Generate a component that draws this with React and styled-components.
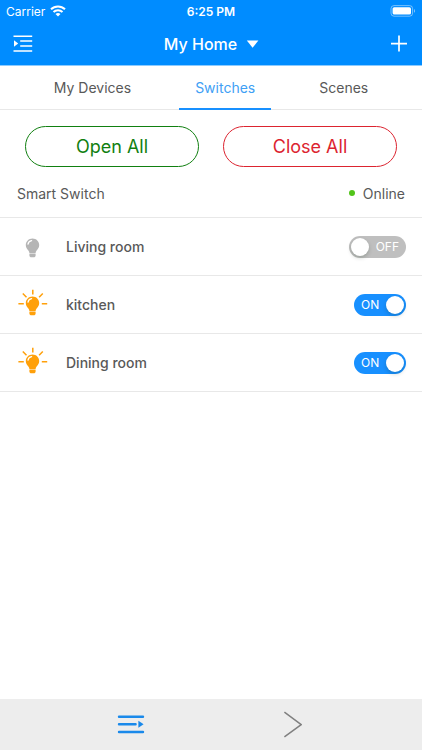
import { useState } from "react";
import styled, { createGlobalStyle } from "styled-components";

const colors = {
    Blue: "#008cff",
    Switch: "#1890ff",
    Menu: "#1a89ea",
    Text: "#595959",
    Line: "#e8e8e8",
    Green: "#118011",
    Red: "#dc2430",
    Orange: "#ffa00a",
    Grey: "#b5b5b5",
};

const GlobalStyle = createGlobalStyle`
    * {
        box-sizing: border-box;
    }

    body {
        margin: 0;
        background-color: #fff;
        color: ${colors.Text};
        font-family: Inter, "Liberation Sans", sans-serif;
        font-size: 14px;
    }

    button {
        margin: 0;
        padding: 0;
        border: 0;
        background: none;
        color: inherit;
        font: inherit;
        cursor: pointer;
    }

    svg {
        display: block;
    }
`;

const Page = styled.div`
    min-height: 100vh;
    display: flex;
    flex-direction: column;
`;

const Header = styled.header`
    background-color: ${colors.Blue};
    border-bottom: 1px solid #8ccbff;
    color: #fff;
`;

const StatusBar = styled.div`
    display: grid;
    grid-template-columns: 1fr auto 1fr;
    align-items: center;
    height: 22px;
    padding: 0 6px;
    font-size: 12px;
`;

const Carrier = styled.span`
    display: flex;
    align-items: center;
    gap: 5px;
`;

const Time = styled.span`
    font-weight: 600;
`;

const Battery = styled.span`
    justify-self: end;
`;

const NavBar = styled.div`
    display: flex;
    align-items: center;
    justify-content: space-between;
    height: 43px;
    padding: 0 14px 0 13px;
`;

const HomeButton = styled.button`
    display: flex;
    align-items: center;
    gap: 9px;
    font-size: 16px;
    font-weight: 500;
`;

const Tabs = styled.nav`
    display: flex;
    justify-content: center;
    gap: 32px;
    height: 44px;
    border-bottom: 1px solid ${colors.Line};
`;

const Tab = styled.button`
    height: 44px;
    padding: 0 16px;
    border-bottom: 2px solid ${(props) => (props.$active ? colors.Switch : "transparent")};
    color: ${(props) => (props.$active ? "#40a0f5" : colors.Text)};
`;

const Actions = styled.div`
    display: grid;
    grid-template-columns: 1fr 1fr;
    gap: 24px;
    padding: 16px 25px 0;
`;

const ActionButton = styled.button`
    height: 41px;
    border: 1px solid ${(props) => props.$color};
    border-radius: 21px;
    color: ${(props) => props.$color};
    font-size: 18px;
`;

const DeviceHeader = styled.div`
    display: flex;
    align-items: center;
    justify-content: space-between;
    height: 51px;
    padding: 2px 17px 0;
    border-bottom: 1px solid ${colors.Line};
`;

const Online = styled.span`
    display: flex;
    align-items: center;
    gap: 8px;

    &::before {
        content: "";
        width: 6px;
        height: 6px;
        border-radius: 50%;
        background-color: #52c41a;
    }
`;

const List = styled.ul`
    flex-grow: 1;
    margin: 0;
    padding: 0;
    list-style: none;
`;

const Row = styled.li`
    display: flex;
    align-items: center;
    height: 58px;
    padding: 0 16px;
    border-bottom: 1px solid ${colors.Line};
`;

const RoomName = styled.label`
    flex-grow: 1;
    margin-left: 16px;
    font-weight: 500;
`;

const Toggle = styled.label`
    position: relative;
    display: flex;
    align-items: center;
    justify-content: ${(props) => (props.$on ? "flex-start" : "flex-end")};
    width: ${(props) => (props.$on ? 52 : 57)}px;
    height: 22px;
    padding: 0 7px;
    border-radius: 11px;
    background-color: ${(props) => (props.$on ? colors.Switch : "#bfbfbf")};
    color: #fff;
    font-size: 12px;
    cursor: pointer;

    input {
        position: absolute;
        inset: 0;
        margin: 0;
        opacity: 0;
    }

    &::after {
        content: "";
        position: absolute;
        top: 2px;
        ${(props) => (props.$on ? "right" : "left")}: 2px;
        width: 18px;
        height: 18px;
        border-radius: 50%;
        background-color: #fff;
        box-shadow: 0 2px 4px rgba(0, 35, 11, 0.2);
    }
`;

const Footer = styled.footer`
    display: grid;
    grid-template-columns: 1fr 1fr;
    height: 51px;
    padding: 0 50px;
    background-color: #ededed;
`;

const FooterButton = styled.button`
    display: flex;
    align-items: center;
    justify-content: center;
`;

function WifiIcon() {
    return (
        <svg width="16" height="12" viewBox="0 0 16 12" fill="none" stroke="#fff" strokeWidth="2">
            <path d="M1 4.3a10 10 0 0 1 14 0M3.5 7a6.4 6.4 0 0 1 9 0" />
            <path d="M8 11.6 5.5 9.1a3.6 3.6 0 0 1 5 0z" fill="#fff" stroke="none" />
        </svg>
    );
}

function BatteryIcon() {
    return (
        <svg width="26" height="12" viewBox="0 0 26 12">
            <rect x="1" y=".6" width="21.6" height="10.6" rx="3" fill="none" stroke="#fff" strokeOpacity=".45" />
            <rect x="2.6" y="2.2" width="18.4" height="7.4" rx="1.6" fill="#fff" />
            <path d="M24 4c1.4.5 1.4 3.3 0 3.8z" fill="#fff" fillOpacity=".5" />
        </svg>
    );
}

function MenuIcon() {
    return (
        <svg width="20" height="18" viewBox="0 0 20 18" fill="none" stroke="#fff" strokeWidth="1.5">
            <path d="M.5 1.2h18.7M7.2 6h12M7.2 11h12M.5 15.9h18.7" />
            <path d="M1 5.2v6.6L5.2 8.5z" fill="#fff" stroke="none" />
        </svg>
    );
}

function BulbIcon({ on }) {
    const fill = on ? colors.Orange : colors.Grey;

    return (
        <svg width="34" height="34" viewBox="0 0 34 34" fill={fill}>
            <path d="M16.5 8.4c-3.8 0-6.7 2.9-6.7 6.6 0 2.5 1.2 3.8 2.4 5.3.8 1 1.2 1.9 1.3 3.1h6c.1-1.2.5-2.1 1.3-3.1 1.2-1.5 2.4-2.8 2.4-5.3 0-3.7-2.9-6.6-6.7-6.6z" />
            <path d="M13.4 24.1h6.2v1.4c0 1.2-.8 1.8-2 1.8h-2.2c-1.2 0-2-.6-2-1.8z" />
            <path d="M12 14.2c.3-1.9 1.7-3.3 3.6-3.6" fill="none" stroke="#fff" strokeWidth="1.3" strokeLinecap="round" />
            {on && (
                <path d="M16.8 1.7v4.8M6.8 5.5l3.7 3.7M26.8 5.5l-3.7 3.7M2.4 15.7h5.4M25.8 15.7h5.4" fill="none" stroke={fill} strokeWidth="1.5" />
            )}
        </svg>
    );
}

export default function App() {
    const [tab, setTab] = useState("Switches");
    const [rooms, setRooms] = useState([
        { id: "living", name: "Living room", on: false },
        { id: "kitchen", name: "kitchen", on: true },
        { id: "dining", name: "Dining room", on: true },
    ]);

    const setAll = (on) => setRooms(rooms.map((room) => ({ ...room, on })));
    const toggle = (id) => setRooms(rooms.map((room) => (room.id === id ? { ...room, on: !room.on } : room)));

    return (
        <Page>
            <GlobalStyle />
            <Header>
                <StatusBar>
                    <Carrier>
                        Carrier <WifiIcon />
                    </Carrier>
                    <Time>6:25 PM</Time>
                    <Battery>
                        <BatteryIcon />
                    </Battery>
                </StatusBar>
                <NavBar>
                    <button aria-label="Menu">
                        <MenuIcon />
                    </button>
                    <HomeButton>
                        My Home
                        <svg width="13" height="8" viewBox="0 0 13 8" fill="#fff">
                            <path d="M.8.4h11.6L6.6 7.8z" />
                        </svg>
                    </HomeButton>
                    <button aria-label="Add">
                        <svg width="18" height="18" viewBox="0 0 18 18" stroke="#fff" strokeWidth="1.7">
                            <path d="M9 .6v16M1 8.6h16" />
                        </svg>
                    </button>
                </NavBar>
            </Header>

            <Tabs>
                {["My Devices", "Switches", "Scenes"].map((name) => (
                    <Tab key={name} $active={tab === name} onClick={() => setTab(name)}>
                        {name}
                    </Tab>
                ))}
            </Tabs>

            <Actions>
                <ActionButton $color={colors.Green} onClick={() => setAll(true)}>
                    Open All
                </ActionButton>
                <ActionButton $color={colors.Red} onClick={() => setAll(false)}>
                    Close All
                </ActionButton>
            </Actions>

            <DeviceHeader>
                <span>Smart Switch</span>
                <Online>Online</Online>
            </DeviceHeader>

            <List>
                {rooms.map((room) => (
                    <Row key={room.id}>
                        <BulbIcon on={room.on} />
                        <RoomName htmlFor={room.id}>{room.name}</RoomName>
                        <Toggle $on={room.on}>
                            <input id={room.id} type="checkbox" checked={room.on} onChange={() => toggle(room.id)} />
                            {room.on ? "ON" : "OFF"}
                        </Toggle>
                    </Row>
                ))}
            </List>

            <Footer>
                <FooterButton aria-label="List">
                    <svg width="28" height="20" viewBox="0 0 28 20" fill="none" stroke={colors.Menu} strokeWidth="2.4" strokeLinecap="round">
                        <path d="M2 1.7h24M2 9.3h16.6M2 17h24" />
                        <path d="M21.4 5.8v7l5.2-3.5z" fill={colors.Menu} stroke="none" />
                    </svg>
                </FooterButton>
                <FooterButton aria-label="Next">
                    <svg width="20" height="28" viewBox="0 0 20 28" fill="none" stroke="#808080" strokeWidth="1.5">
                        <path d="M2.4 1.2 19.2 13.6 2.4 25.8" />
                    </svg>
                </FooterButton>
            </Footer>
        </Page>
    );
}
